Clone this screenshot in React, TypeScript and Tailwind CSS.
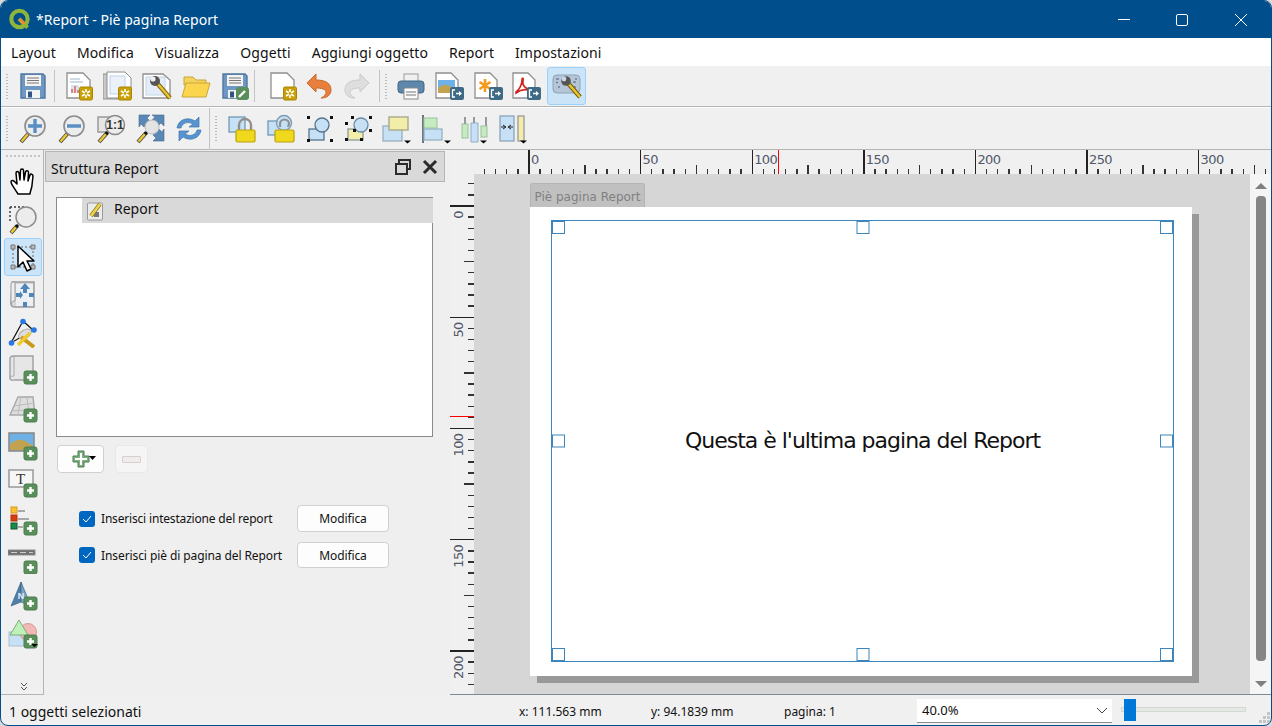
import type { ReactNode } from 'react'

const Ico = ({ children, s = 30 }: { children: ReactNode; s?: number }) => (
  <svg width={s} height={s} viewBox="0 0 30 30" className="block shrink-0">
    {children}
  </svg>
)

const Star = () => (
  <g>
    <rect x="15.5" y="16" width="13" height="13" rx="1.5" fill="#c9a006" stroke="#a88500" />
    <path d="M22 18v9M18 20l8 5M26 20l-8 5" stroke="#fff" strokeWidth="1.6" />
    <circle cx="22" cy="22.5" r="1.4" fill="#c9a006" />
  </g>
)
const Plus = ({ x = 16, y = 16 }: { x?: number; y?: number }) => (
  <g>
    <rect x={x} y={y} width="13" height="13" rx="2" fill="#5a8f5c" stroke="#4c7c4e" />
    <path d={`M${x + 6.5} ${y + 3}v7M${x + 3} ${y + 6.5}h7`} stroke="#fff" strokeWidth="2.4" />
  </g>
)
const Export = () => (
  <g>
    <rect x="15" y="16" width="14" height="13" rx="2" fill="#3f6a85" />
    <path d="M20 19h-2.5v7H20" stroke="#fff" strokeWidth="1.3" fill="none" />
    <path d="M21 22.5h4" stroke="#fff" strokeWidth="1.5" />
    <path d="M24 20l3 2.5-3 2.5z" fill="#fff" />
  </g>
)
const Caret = ({ x = 23, y = 27 }: { x?: number; y?: number }) => <path d={`M${x} ${y}h7l-3.5 3z`} fill="#000" />

const Handle = ({ x = 11, y = 19 }: { x?: number; y?: number }) => (
  <g>
    <path d={`M3 28L${x} ${y}`} stroke="#444" strokeWidth="4" />
    <path d={`M3.5 27.5L${x - 1} ${y + 1}`} stroke="#f0c92e" strokeWidth="2.4" />
    <circle cx={x} cy={y} r="1.8" fill="#111" />
  </g>
)
const Lens = ({ cx = 17, cy = 12, r = 10 }: { cx?: number; cy?: number; r?: number }) => (
  <circle cx={cx} cy={cy} r={r} fill="#ececec" stroke="#8b8b8b" strokeWidth="1.6" />
)
const Page = ({ x = 4, w = 21, fill = '#fff' }: { x?: number; w?: number; fill?: string }) => (
  <path d={`M${x} 2h${w - 7}l7 7v18h-${w}z`} fill={fill} stroke="#8f8f8f" strokeWidth="1.3" />
)
const Floppy = () => (
  <g>
    <path d="M3 3h22l2 2v22H3z" fill="#6f97c4" stroke="#4f769f" strokeWidth="1.4" />
    <rect x="7" y="4" width="16" height="11" fill="#f3f3f3" />
    <path d="M9 7h12M9 9.5h12M9 12h12" stroke="#777" />
    <rect x="8" y="19" width="14" height="8" fill="#f3f3f3" />
    <rect x="10" y="20.5" width="4" height="6" fill="#31557f" />
  </g>
)

const I: Record<string, ReactNode> = {
  save: <Ico><Floppy /></Ico>,
  newReport: (
    <Ico>
      <Page x={3} w={23} />
      <path d="M6 8h10M6 11h13" stroke="#9fb4c8" />
      <rect x="7" y="14" width="8" height="8" fill="#d7e4ef" />
      <path d="M8 22v-4M11 22v-7M14 22v-3" stroke="#d66" strokeWidth="1.5" />
      <Star />
    </Ico>
  ),
  dup: (
    <Ico>
      <path d="M0 3h20v25H0z" fill="#c9c9c9" stroke="#8f8f8f" />
      <path d="M4 1h18l6 6v20H4z" fill="#fff" stroke="#8f8f8f" />
      <rect x="7" y="5" width="15" height="18" fill="#eaf1fa" stroke="#c2d3e8" />
      <Star />
    </Ico>
  ),
  manager: (
    <Ico>
      <path d="M1 3h20l7 6v18H1z" fill="#fff" stroke="#8f8f8f" strokeWidth="1.3" />
      <rect x="4" y="6" width="19" height="18" fill="#e4edf7" stroke="#c5d4e5" />
      <path d="M15 12l13 15" stroke="#7d6210" strokeWidth="4.4" />
      <path d="M15 12l13 15" stroke="#e8c42e" strokeWidth="2.6" />
      <circle cx="13" cy="10" r="5" fill="#555" />
      <circle cx="11" cy="8" r="2.6" fill="#f0f0f0" />
    </Ico>
  ),
  folder: (
    <Ico>
      <path d="M3 6h9l3 3h10v5H3z" fill="#f3d35c" stroke="#c9a63a" />
      <path d="M5 12h24l-4 14H1z" fill="#fcd54f" stroke="#c9a63a" />
    </Ico>
  ),
  saveAs: (
    <Ico>
      <Floppy />
      <rect x="16" y="16" width="13" height="13" rx="3" fill="#5a8f5c" />
      <path d="M19 26l6-6" stroke="#fff" strokeWidth="2.4" />
    </Ico>
  ),
  newPage: <Ico><Page x={3} w={23} /><Star /></Ico>,
  undo: (
    <Ico>
      <path d="M3 12L12 3v6c9 0 15 3 15 10 0 5-4 8-10 8 4-2 5-4 5-6 0-3-5-4-10-4v4z" fill="#e87f3d" stroke="#c96a2c" />
    </Ico>
  ),
  redo: (
    <Ico>
      <path d="M27 12L18 3v6C9 9 3 12 3 19c0 5 4 8 10 8-4-2-5-4-5-6 0-3 5-4 10-4v4z" fill="#dedede" stroke="#c9c9c9" />
    </Ico>
  ),
  print: (
    <Ico>
      <rect x="8" y="3" width="14" height="8" fill="#f0f0f0" stroke="#999" />
      <rect x="2" y="10" width="26" height="12" rx="3" fill="#5d88ab" stroke="#3f6785" />
      <rect x="8" y="17" width="14" height="11" fill="#fafafa" stroke="#888" />
      <path d="M10 21h10M10 24h10" stroke="#777" />
    </Ico>
  ),
  expImg: (
    <Ico>
      <Page x={1} w={22} />
      <rect x="3" y="9" width="17" height="13" fill="#6eb1e6" />
      <path d="M3 22v-5c5-4 9-4 17 1v4z" fill="#c2a24e" />
      <Export />
    </Ico>
  ),
  expSvg: (
    <Ico>
      <Page x={1} w={22} />
      <path d="M11 8v13M5.5 11l11 7M16.5 11l-11 7" stroke="#f59a1b" strokeWidth="2.6" />
      <Export />
    </Ico>
  ),
  expPdf: (
    <Ico>
      <Page x={1} w={22} />
      <path d="M4 21c3-2 6-7 6-12 0-3 2-2 1 1-1 5 3 8 7 8 2 0 1 2-2 1-4-1-8 0-12 3z" fill="none" stroke="#d2241c" strokeWidth="1.6" />
      <Export />
    </Ico>
  ),
  settings: (
    <Ico>
      <rect x="1" y="4" width="27" height="18" rx="4" fill="#b4c6d8" stroke="#8ea2b6" />
      <path d="M4 8h3M4 11l2 1M23 8h2M6 16h2M21 11h3M22 16h2" stroke="#4a5f73" />
      <path d="M15 11l13 15" stroke="#6d560c" strokeWidth="4.4" />
      <path d="M15 11l13 15" stroke="#e8c42e" strokeWidth="2.6" />
      <circle cx="14" cy="10" r="4.8" fill="#555" />
      <circle cx="12" cy="8" r="2.4" fill="#c6d6e4" />
    </Ico>
  ),
  zoomIn: (
    <Ico>
      <Handle />
      <Lens />
      <path d="M17 5v14M10 12h14" stroke="#5b8fc4" strokeWidth="3.4" />
    </Ico>
  ),
  zoomOut: (
    <Ico>
      <Handle />
      <Lens />
      <path d="M10 12h14" stroke="#5b8fc4" strokeWidth="3.4" />
    </Ico>
  ),
  zoom11: (
    <Ico>
      <rect x="2" y="3" width="18" height="15" fill="#e6e6e6" stroke="#999" strokeWidth="1.5" />
      <Handle />
      <Lens cx={19} cy={11} r={9.5} />
      <text x="19" y="15" textAnchor="middle" fontSize="12" fontWeight="700" fill="#333" fontFamily="Liberation Sans, sans-serif">1:1</text>
    </Ico>
  ),
  zoomFull: (
    <Ico>
      <path d="M4 1h11l-3 3 3 3-6 6-3-3-2 3zM29 1v11l-3-3-3 3-6-6 3-3-3-2zM29 27H18l3-3-3-3 6-6 3 3 2-3z" fill="#5a88b6" stroke="#44698f" strokeWidth=".6" />
      <Handle />
      <circle cx="17" cy="13" r="7" fill="#e3e3e3" stroke="#bbb" />
    </Ico>
  ),
  refresh: (
    <Ico>
      <path d="M3 14C4 6 13 2 21 7l4-4v10H15l4-3C14 7 8 9 7 14z" fill="#5594cf" stroke="#3f77ad" strokeWidth=".7" />
      <path d="M27 16c-1 8-10 12-18 7l-4 4V17h10l-4 3c5 3 11 1 12-4z" fill="#5594cf" stroke="#3f77ad" strokeWidth=".7" />
    </Ico>
  ),
  lock: (
    <Ico>
      <g transform="translate(2 0)">
        <rect x="1" y="3" width="16" height="15" fill="#c6e0f5" stroke="#7d9db6" strokeWidth="1.4" />
        <path d="M11 17v-6a6 6 0 0 1 12 0v6" fill="none" stroke="#8f8f8f" strokeWidth="2.4" />
        <rect x="8" y="16" width="19" height="12" rx="1.5" fill="#f0d81c" stroke="#b9a20e" strokeWidth="1.2" />
      </g>
    </Ico>
  ),
  unlock: (
    <Ico>
      <g transform="translate(2 0)">
        <rect x="1" y="7" width="14" height="14" fill="#c6e0f5" stroke="#7d9db6" strokeWidth="1.4" />
        <circle cx="17" cy="9" r="7.5" fill="#c6e0f5" stroke="#7d9db6" strokeWidth="1.4" />
        <path d="M13 13v-3a4.5 4.5 0 0 1 9 0l-1 3" fill="none" stroke="#8f8f8f" strokeWidth="2.2" />
        <rect x="8" y="16" width="19" height="12" rx="1.5" fill="#f0d81c" stroke="#b9a20e" strokeWidth="1.2" />
      </g>
    </Ico>
  ),
  group: (
    <Ico>
      <rect x="5" y="15" width="15" height="11" fill="#c6e0f5" stroke="#55748c" strokeWidth="1.3" />
      <circle cx="18" cy="11" r="7" fill="#c6e0f5" stroke="#55748c" strokeWidth="1.3" />
      <path d="M3 2h3v3H3zM26 2h3v3h-3zM3 25h3v3H3zM26 25h3v3h-3z" fill="#111" />
    </Ico>
  ),
  ungroup: (
    <Ico>
      <rect x="5" y="15" width="15" height="11" fill="#f2eda8" stroke="#8b9a9b" strokeWidth="1.3" />
      <circle cx="18" cy="11" r="7" fill="#c6e0f5" stroke="#6d8ca2" strokeWidth="1.3" />
      <path d="M2 8h3v3H2zM8 2h3v3H8zM26 2h3v3h-3zM26 15h3v3h-3zM2 24h3v3H2zM10 15h3v3h-3zM17 24h3v3h-3z" fill="#111" />
    </Ico>
  ),
  raise: (
    <Ico>
      <rect x="1" y="12" width="19" height="15" fill="#c6e0f5" stroke="#9db4c4" strokeWidth="1.4" />
      <rect x="7" y="3" width="19" height="13" fill="#f2eda8" stroke="#a9a98a" strokeWidth="1.4" />
      <Caret x={22} y={26.5} />
    </Ico>
  ),
  align: (
    <Ico>
      <path d="M2 1v28" stroke="#5f6b70" strokeWidth="1.8" />
      <rect x="3" y="4" width="13" height="10" fill="#c4ecc0" stroke="#9fbd9f" />
      <rect x="3" y="15" width="18" height="11" fill="#c6e0f5" stroke="#92adc0" strokeWidth="1.2" />
      <Caret x={23} y={26.5} />
    </Ico>
  ),
  distribute: (
    <Ico>
      <path d="M5 3v9M14 3v9M26 3v9" stroke="#5f6b70" strokeWidth="1.3" />
      <rect x="2" y="10" width="6" height="14" fill="#c4ecc0" stroke="#9fbd9f" />
      <path d="M14 9h-3v19h7V9z" fill="#c6e0f5" stroke="#92adc0" />
      <rect x="21" y="12" width="6" height="11" fill="#c4ecc0" stroke="#9fbd9f" />
      <Caret x={20} y={26.5} />
    </Ico>
  ),
  resize: (
    <Ico>
      <rect x="1" y="2" width="14" height="25" fill="#c6e0f5" stroke="#8ba6ba" strokeWidth="1.3" />
      <path d="M2 13h4M14 13h-4M4 11l3 2-3 2M12 11l-3 2 3 2" stroke="#222" fill="none" />
      <rect x="19" y="2" width="6" height="25" fill="#f2eda8" stroke="#999" strokeWidth="1.3" />
      <Caret x={21} y={26.5} />
    </Ico>
  ),
  hand: (
    <Ico>
      <path
        d="M10 27C7 22 3 17 3 15c0-2 2-2 3.500-.5L9 17 8 6c0-2 2.500-2 3 0l1 7 .5-9.500c0-2 3-2 3 0L16 13l1.500-8c.5-2 3-1.500 3 .5L20 14l2-6c.5-1.500 3-1 3 1l-1 9c0 3-1.500 5-2 9z"
        fill="#fff"
        stroke="#000"
        strokeWidth="1.5"
        strokeLinejoin="round"
      />
    </Ico>
  ),
  zoomArea: (
    <Ico>
      <path d="M2 2h14M2 2v16" stroke="#333" strokeWidth="1.4" strokeDasharray="2 2" fill="none" />
      <Handle x={9} y={21} />
      <circle cx="18" cy="12" r="10" fill="#ececec" stroke="#8b8b8b" strokeWidth="1.5" />
    </Ico>
  ),
  select: (
    <Ico>
      <rect x="5" y="5" width="20" height="20" fill="none" stroke="#666" strokeDasharray="2 2" />
      <path d="M3 3h4v4H3zM23 3h4v4h-4zM3 23h4v4H3zM23 23h4v4h-4z" fill="#b8b8b8" stroke="#777" />
      <path d="M10 4v21l5-5 4 9 4-2-4-8h7z" fill="#fff" stroke="#000" strokeWidth="1.5" strokeLinejoin="round" />
    </Ico>
  ),
  moveContent: (
    <Ico>
      <path d="M4 2h22v25H7c-2 0-4-1-4-3z" fill="#d6d6d6" stroke="#9a9a9a" strokeWidth="1.4" />
      <path d="M3 24c0-2 2-3 4-3V2H5C3 2 3 4 3 5z" fill="#efefef" stroke="#9a9a9a" />
      <rect x="8" y="4" width="17" height="22" fill="#ecf0f4" />
      <path d="M17 3l5 6h-3v4h-4V9h-3zM8 13h4v-2l3 4-3 4v-2H8zM15 22h4v5h-4zM21 13h5v4h-5z" fill="#4f86b8" />
    </Ico>
  ),
  editNodes: (
    <Ico>
      <path d="M15 3L3 25 25 12z" fill="none" stroke="#111" strokeWidth="1.2" />
      <ellipse cx="17" cy="16" rx="7" ry="4" fill="#ddd" stroke="#aaa" transform="rotate(-30 17 16)" />
      <path d="M13 19l13 10" stroke="#c79a1c" strokeWidth="4" />
      <path d="M10 27l12-12" stroke="#f0c92e" strokeWidth="3.4" />
      <circle cx="15" cy="3.500" r="2.800" fill="#2a78e4" />
      <circle cx="3.500" cy="25" r="2.800" fill="#2a78e4" />
      <circle cx="26" cy="12" r="2.800" fill="#2a78e4" />
    </Ico>
  ),
  addMap: (
    <Ico>
      <path d="M6 1h19v24H7c-2 0-5 1-5-2V4c0-2 2-3 4-3z" fill="#e6e6e6" stroke="#9f9f9f" strokeWidth="1.4" />
      <path d="M6 1v20c-2 0-4 .5-4 2" fill="none" stroke="#a8a8a8" />
      <Plus />
    </Ico>
  ),
  add3d: (
    <Ico>
      <path d="M10 4h15l2 18H2z" fill="#dedede" stroke="#a8a8a8" strokeWidth="1.4" />
      <path d="M6 13l20-3M4 18l22-2M13 4l-3 18M19 4l2 18" stroke="#bcbcbc" fill="none" />
      <Plus />
    </Ico>
  ),
  addImg: (
    <Ico>
      <rect x="1" y="2" width="25" height="18" fill="#6eb1e6" stroke="#8c8c8c" strokeWidth="1.6" />
      <path d="M2 19v-6c8-6 12-6 23 2v4z" fill="#c2a24e" />
      <Plus />
    </Ico>
  ),
  addLabel: (
    <Ico>
      <rect x="1" y="2" width="24" height="17" fill="#f6f6f6" stroke="#999" strokeWidth="1.5" />
      <text x="12.500" y="16" textAnchor="middle" fontSize="15" fontFamily="Liberation Serif, serif" fill="#333">T</text>
      <Plus />
    </Ico>
  ),
  addLegend: (
    <Ico>
      <rect x="3" y="1" width="6" height="6" fill="#fbc02d" stroke="#d89a1f" />
      <rect x="3" y="9" width="6" height="6" fill="#d93a12" stroke="#b52c0c" />
      <rect x="3" y="17" width="6" height="6" fill="#1b8a4b" stroke="#0d5a2c" />
      <path d="M10 5h7M10 13h11M10 21h5" stroke="#a8a8a8" strokeWidth="2" />
      <Plus y={16} />
    </Ico>
  ),
  addScale: (
    <Ico>
      <rect x="0" y="6" width="27" height="5" fill="#6f6f6f" stroke="#8c8c8c" />
      <path d="M3 8.500h6M12 8.500h6M21 8.500h4" stroke="#d0d0d0" strokeWidth="1.2" />
      <Plus y={17} />
    </Ico>
  ),
  addNorth: (
    <Ico>
      <path d="M13 1L3 25l10-4z" fill="#4f7ea8" stroke="#3c6488" strokeWidth=".7" />
      <path d="M13 1l10 24-10-4z" fill="#7ba3c9" stroke="#3c6488" strokeWidth=".7" />
      <text x="13" y="18" textAnchor="middle" fontSize="9" fontWeight="700" fill="#e8f0f8" fontFamily="Liberation Sans, sans-serif">N</text>
      <Plus />
    </Ico>
  ),
  addShape: (
    <Ico>
      <rect x="1" y="13" width="20" height="14" fill="#c6e0f5" stroke="#a9c0d0" />
      <circle cx="20" cy="13" r="8.500" fill="#f3b9b5" stroke="#d69b97" />
      <path d="M11 1l9 15H2z" fill="#bff0b9" stroke="#7cac7a" />
      <Plus y={16} />
      <Caret x={23} y={25} />
    </Ico>
  ),
}

const Grip = () => (
  <div className="flex flex-col justify-center gap-[2px] w-[5px] h-[34px] shrink-0">
    {Array.from({ length: 9 }).map((_, i) => (
      <div key={i} className="w-[2px] h-[1px] bg-[#b9b9b9] ml-[1px]" />
    ))}
  </div>
)

const Sep = () => <div className="w-px h-[32px] bg-[#c4c4c4] shrink-0" />

const Tool = ({ icon, on }: { icon: string; on?: boolean }) => (
  <div className={on ? 'w-[39px] h-[38px] flex items-center justify-center rounded-[3px] bg-[#cce4f7] border border-[#99d1ff] shrink-0' : 'w-[39px] h-[38px] flex items-center justify-center shrink-0'}>
    {I[icon]}
  </div>
)

const SideTool = ({ icon, on }: { icon: string; on?: boolean }) => (
  <div className={on ? 'w-[38px] h-[37.7px] flex items-center justify-center rounded-[3px] bg-[#cce4f7] border border-[#99d1ff] shrink-0' : 'w-[38px] h-[37.7px] flex items-center justify-center shrink-0'}>
    {I[icon]}
  </div>
)

const hMm = 2.232
const vMm = 2.225

const HRuler = () => {
  const ox = 79
  const ticks = []
  for (let m = -20; m <= 330; m += 5) {
    const x = ox + m * hMm
    if (x < 24 || x > 816) continue
    const major = m % 50 === 0
    const mid = m % 25 === 0
    ticks.push(
      <line key={m} x1={x} x2={x} y1={major ? 0 : mid ? 15 : 19} y2={24} stroke={major ? '#222' : '#333'} strokeWidth="1.4" shapeRendering="crispEdges" />,
    )
    if (major && m >= 0) {
      ticks.push(
        <text key={`t${m}`} x={x + 2} y={14} fontSize="13" fill="#50586a" fontFamily="DejaVu Sans, sans-serif" letterSpacing="-0.6">{m}</text>,
      )
    }
  }
  return (
    <svg width="821" height="24" className="block">
      {ticks}
      <line x1={328} x2={328} y1={0} y2={24} stroke="#f00" shapeRendering="crispEdges" />
    </svg>
  )
}

const VRuler = () => {
  const oy = 32
  const ticks = []
  for (let m = -10; m <= 215; m += 5) {
    const y = oy + m * vMm
    if (y < 0 || y > 520) continue
    const major = m % 50 === 0
    const mid = m % 25 === 0
    ticks.push(
      <line key={m} y1={y} y2={y} x1={major ? 0 : mid ? 14 : 18} x2={24} stroke={major ? '#222' : '#333'} strokeWidth="1.4" shapeRendering="crispEdges" />,
    )
    if (major && m >= 0) {
      ticks.push(
        <text key={`t${m}`} x={13} y={y + 5} fontSize="13" fill="#50586a" textAnchor="end" fontFamily="DejaVu Sans, sans-serif" letterSpacing="-0.6" transform={`rotate(-90 13 ${y + 5})`}>{m}</text>,
      )
    }
  }
  return (
    <svg width="24" height="520" className="block shrink-0">
      {ticks}
      <line y1={242} y2={242} x1={0} x2={24} stroke="#f00" shapeRendering="crispEdges" />
    </svg>
  )
}

const Knob = ({ className }: { className: string }) => (
  <div className={`absolute w-[13px] h-[13px] border border-[#3d85bd] bg-white ${className}`} />
)

const Check = ({ label, className }: { label: string; className: string }) => (
  <div className="flex items-center">
    <div className="w-4 h-4 rounded-[3px] bg-[#0067c0] flex items-center justify-center shrink-0">
      <svg width="10" height="8" viewBox="0 0 10 8"><path d="M1 4l3 3 5-6" stroke="#fff" strokeWidth="1" fill="none" /></svg>
    </div>
    <span className={`ml-[6px] w-[196px] pt-px text-[12px] text-[#111] whitespace-nowrap ${className}`}>{label}</span>
  </div>
)

const Btn = ({ h }: { h: string }) => (
  <div className={`${h} w-[92px] pt-px rounded-[4px] bg-[#fdfdfd] border border-[#d0d0d0] flex items-center justify-center text-[12px] tracking-[-0.1px] text-[#111]`}>Modifica</div>
)

export default function App() {
  return (
    <div className="w-[1272px] h-[726px] bg-[#d8d8d8] overflow-hidden font-['Noto_Sans',sans-serif] text-[#111]">
      <div className="w-full h-full flex flex-col rounded-[8px] border border-[#004e8c] bg-[#f0f0f0] overflow-hidden">
        {/* title bar */}
        <div className="h-[37px] shrink-0 bg-[#004e8c] flex items-center text-white relative">
          <svg width="24" height="24" viewBox="0 0 22 22" className="ml-[7px] shrink-0">
            <circle cx="10.500" cy="10" r="7.500" fill="none" stroke="#8fb63a" strokeWidth="3.8" />
            <path d="M10 10l8 8" stroke="#8fb63a" strokeWidth="3.4" />
            <path d="M10.500 10l4.500 4.500" stroke="#ef8a2c" strokeWidth="2.800" />
          </svg>
          <span className="ml-[4px] text-[14px] tracking-[0.04px]">*Report - Piè pagina Report</span>
          <div className="ml-auto flex items-center">
            <svg width="12" height="2" className="mr-[46px]"><rect width="12" height="1" fill="#fff" /></svg>
            <svg width="12" height="12" className="mr-[47px]"><rect x=".5" y=".5" width="11" height="11" rx="1.5" fill="none" stroke="#fff" /></svg>
            <svg width="12" height="12" className="mr-[24px]"><path d="M0 0l12 12M12 0L0 12" stroke="#fff" /></svg>
          </div>
        </div>

        {/* menu */}
        <div className="h-[28px] shrink-0 bg-white flex items-center pl-[10px] gap-[21px] text-[14px] tracking-[0.08px]">
          <span>Layout</span>
          <span>Modifica</span>
          <span>Visualizza</span>
          <span>Oggetti</span>
          <span>Aggiungi oggetto</span>
          <span>Report</span>
          <span>Impostazioni</span>
        </div>

        {/* main toolbar */}
        <div className="h-[41px] shrink-0 flex items-center border-b border-[#b5b5b5] pl-[4px]">
          <Grip />
          <div className="ml-[3px]"><Tool icon="save" /></div>
          <div className="ml-[2px]"><Sep /></div>
          <div className="ml-[4px] flex"><Tool icon="newReport" /><Tool icon="dup" /><Tool icon="manager" /><Tool icon="folder" /><Tool icon="saveAs" /></div>
          <Sep />
          <div className="ml-[8px] flex"><Tool icon="newPage" /></div>
          <div className="-ml-[3px] flex"><Tool icon="undo" /></div>
          <div className="-ml-[1px] flex"><Tool icon="redo" /></div>
          <div className="ml-[3px]"><Sep /></div>
          <div className="ml-[4px]"><Grip /></div>
          <div className="ml-[2px] flex"><Tool icon="print" /><Tool icon="expImg" /><Tool icon="expSvg" /></div>
          <div className="-ml-[1px]"><Tool icon="expPdf" /></div>
          <div className="ml-px flex"><Tool icon="settings" on /></div>
        </div>

        {/* item toolbar */}
        <div className="h-[43px] shrink-0 flex items-center border-t border-t-white border-b border-b-[#b5b5b5] pl-[4px]">
          <Grip />
          <div className="ml-[3px] flex"><Tool icon="zoomIn" /><Tool icon="zoomOut" /><Tool icon="zoom11" /><Tool icon="zoomFull" /><Tool icon="refresh" /></div>
          <div className="ml-[1px] h-[42px] w-px bg-[#c4c4c4]" />
          <div className="ml-[4px]"><Grip /></div>
          <div className="ml-[2px] flex"><Tool icon="lock" /><Tool icon="unlock" /><Tool icon="group" /><Tool icon="ungroup" /><Tool icon="raise" /><Tool icon="align" /><Tool icon="distribute" /><Tool icon="resize" /></div>
        </div>

        <div className="flex-1 flex min-h-0">
          {/* side tools */}
          <div className="w-[43px] shrink-0 pl-[2px] border-r border-b border-[#b5b5b5] flex flex-col items-center relative">
            <div className="mt-[5px] w-[34px] border-t-2 border-dotted border-[#c4c4c4]" />
            <div className="mt-[6px] flex flex-col items-center">
              <SideTool icon="hand" />
              <SideTool icon="zoomArea" />
              <SideTool icon="select" on />
              <SideTool icon="moveContent" />
              <SideTool icon="editNodes" />
              <SideTool icon="addMap" />
              <SideTool icon="add3d" />
              <SideTool icon="addImg" />
              <SideTool icon="addLabel" />
              <SideTool icon="addLegend" />
              <SideTool icon="addScale" />
              <SideTool icon="addNorth" />
              <SideTool icon="addShape" />
            </div>
            <svg width="8" height="10" viewBox="0 0 8 10" className="absolute bottom-[2px] left-[19px]">
              <path d="M1 1l3 3 3-3M1 5l3 3 3-3" stroke="#555" fill="none" />
            </svg>
          </div>

          {/* dock */}
          <div className="w-[406px] shrink-0 bg-[#efefef]">
            <div className="mt-px ml-px w-[400px] h-[31px] bg-[#d9d9d9] border border-[#b5b5b5] flex items-center pl-[5px] text-[14px]">
              <span className="pt-[3px]">Struttura Report</span>
              <svg width="18" height="18" viewBox="0 0 18 18" className="ml-auto">
                <path d="M5 5V2h11v9h-3" fill="none" stroke="#2b2b2b" strokeWidth="2" />
                <rect x="2" y="6" width="11" height="10" fill="none" stroke="#2b2b2b" strokeWidth="2" />
              </svg>
              <svg width="16" height="16" viewBox="0 0 16 16" className="ml-[10px] mr-[6px]">
                <path d="M2 2l12 12M14 2L2 14" stroke="#2b2b2b" strokeWidth="3" />
              </svg>
            </div>
            <div className="mt-[15px] ml-[12px] w-[377px] h-[240px] bg-white border border-[#8a8a8a] pl-[25px]">
              <div className="h-[25px] bg-[#d9d9d9] flex items-center pl-[4px] -mr-px">
                <svg width="20" height="20" viewBox="0 0 20 20">
                  <rect x="1.500" y="2" width="15" height="17" rx="1" fill="#ececec" stroke="#999" />
                  <rect x="8" y="11" width="5" height="5" fill="#777" />
                  <path d="M5 15L14 3" stroke="#8c7a1c" strokeWidth="4" />
                  <path d="M5 15L14 3" stroke="#efd44a" strokeWidth="2.600" />
                </svg>
                <span className="ml-[8px] pb-[5px] text-[14px]">Report</span>
              </div>
            </div>
            <div className="mt-[8px] ml-[13px] flex">
              <div className="w-[47px] h-[28px] bg-[#fdfdfd] border border-[#d0d0d0] rounded-[4px] relative">
                <svg width="24" height="18" viewBox="0 0 24 18" className="absolute left-[14px] top-[4px]">
                  <path d="M6 1h6v5h5v6h-5v5H6v-5H1V6h5z" fill="#7fae80" stroke="#4c7c4e" />
                  <path d="M9 3v12M3 9h12" stroke="#fff" strokeWidth="2" />
                  <path d="M17 6h7l-3.500 4z" fill="#000" />
                </svg>
              </div>
              <div className="ml-[11px] w-[33px] h-[28px] bg-[#f5f5f5] border border-[#e8e8e8] rounded-[4px] flex items-center justify-center">
                <div className="w-[19px] h-[7px] rounded-[1px] border border-[#d8cfcf] bg-[#f0ecec]" />
              </div>
            </div>
            <div className="mt-[32px] ml-[35px] flex items-center">
              <Check label="Inserisci intestazione del report" className="tracking-[-0.18px]" />
              <Btn h="h-[27px]" />
            </div>
            <div className="mt-[10px] ml-[35px] flex items-center">
              <Check label="Inserisci piè di pagina del Report" className="tracking-[-0.09px]" />
              <Btn h="h-[26px]" />
            </div>
          </div>

          {/* layout view */}
          <div className="flex-1 min-w-0 flex flex-col">
            <div className="h-[24px] shrink-0 overflow-hidden"><HRuler /></div>
            <div className="flex-1 flex min-h-0 border-b border-[#7f8a90]">
              <VRuler />
              <div className="flex-1 min-w-0 bg-[#d6d6d6] pt-[33px] pl-[56px] overflow-hidden">
                <div className="relative w-[662px] h-[469px] bg-white shadow-[7px_7px_0_#999]">
                  <div className="absolute -top-[24px] left-0 w-[115px] h-[24px] pt-[2px] rounded-t-[3px] bg-[#c0c0c0] border border-b-0 border-[#b4b4b4] flex items-center justify-center text-[12px] text-[#808080] font-['DejaVu_Sans',sans-serif] whitespace-nowrap">Piè pagina Report</div>
                  <div className="absolute left-[21px] top-[13px] w-[623px] h-[442px] pb-[2px] border border-[#3d85bd] flex items-center justify-center text-[22px] text-[#111] font-['DejaVu_Sans',sans-serif] tracking-[-1px] whitespace-nowrap">
                    Questa è l'ultima pagina del Report
                    <Knob className="top-0 left-0" />
                    <Knob className="top-0 left-1/2 -translate-x-1/2" />
                    <Knob className="top-0 right-0" />
                    <Knob className="top-1/2 -translate-y-1/2 left-0" />
                    <Knob className="top-1/2 -translate-y-1/2 right-0" />
                    <Knob className="bottom-0 left-0" />
                    <Knob className="bottom-0 left-1/2 -translate-x-1/2" />
                    <Knob className="bottom-0 right-0" />
                  </div>
                </div>
              </div>
              <div className="w-[21px] shrink-0 bg-[#f5f5f5] flex flex-col items-center">
                <svg width="12" height="6" className="mt-[9px]"><path d="M6 0l6 6H0z" fill="#7f7f7f" /></svg>
                <div className="mt-[7px] w-[10px] h-[465px] rounded-[4px] bg-[#858585]" />
                <svg width="12" height="6" className="mt-[20px]"><path d="M0 0h12L6 6z" fill="#7f7f7f" /></svg>
              </div>
            </div>
          </div>
        </div>

        {/* status bar */}
        <div className="h-[30px] shrink-0 flex items-center relative text-[12px]">
          <span className="w-[518px] pl-[8px] pt-[2px] text-[14px] whitespace-nowrap">1 oggetti selezionati</span>
          <span className="w-[132px] pt-[4px]">x: 111.563 mm</span>
          <span className="w-[133px] pt-[4px]">y: 94.1839 mm</span>
          <span className="w-[133px] pt-[4px]">pagina: 1</span>
          <div className="w-[195px] h-[24px] mt-[2px] bg-white border-b border-[#8a8a8a] flex items-center pl-[5px] pr-[4px] text-[13px]">
            <span className="pt-px">40.0%</span>
            <svg width="12" height="7" viewBox="0 0 12 7" className="ml-auto"><path d="M1 1l5 5 5-5" stroke="#444" fill="none" /></svg>
          </div>
          <div className="ml-[9px] w-[125px] h-[5px] -mt-px bg-[#e5e8e5] border border-[#d2d8d2] relative">
            <div className="absolute -top-[9px] left-[2px] w-[12px] h-[22px] bg-[#0078d7]" />
          </div>
          <svg width="12" height="12" className="absolute right-[1px] bottom-px">
            <path d="M9 0h3v3H9zM5 4h3v3H5zM9 4h3v3H9zM1 8h3v3H1zM5 8h3v3H5zM9 8h3v3H9z" fill="#c4c4c4" />
          </svg>
        </div>
      </div>
    </div>
  )
}
